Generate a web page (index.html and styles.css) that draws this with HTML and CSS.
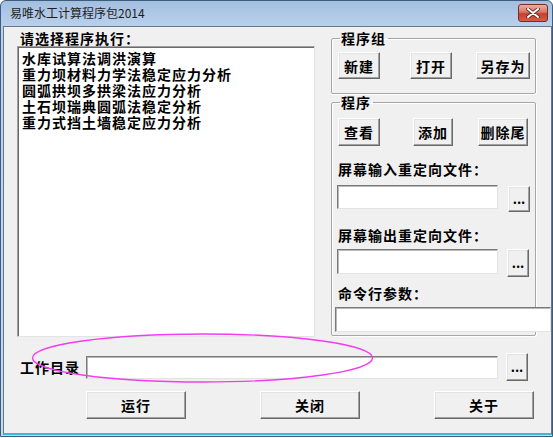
FILE: index.html
```html
<!DOCTYPE html>
<html>
	<head>
		<meta charset="UTF-8">
		<title>易唯水工计算程序包2014</title>
		<link rel="stylesheet" href="styles.css">
	</head>
	<body>
		<div class="window">
			<div class="titlebar">
				<span class="title">易唯水工计算程序包2014</span>
				<div class="close">
					<svg width="16" height="10" viewBox="0 0 16 10">
						<path d="M3 1 L13 9 M13 1 L3 9" stroke="#5a2a24" stroke-width="3.6" stroke-linecap="round"/>
						<path d="M3 1 L13 9 M13 1 L3 9" stroke="#fff" stroke-width="2" stroke-linecap="round"/>
					</svg>
				</div>
			</div>

			<div class="client">
				<div class="top">
					<div class="left">
						<div class="label">请选择程序执行：</div>
						<div class="listbox">
							<div>水库试算法调洪演算</div>
							<div>重力坝材料力学法稳定应力分析</div>
							<div>圆弧拱坝多拱梁法应力分析</div>
							<div>土石坝瑞典圆弧法稳定分析</div>
							<div>重力式挡土墙稳定应力分析</div>
						</div>
					</div>

					<div class="right">
						<fieldset class="group g1">
							<legend>程序组</legend>
							<div class="btnrow">
								<div class="btn b-new">新建</div>
								<div class="btn b-open">打开</div>
								<div class="btn b-save">另存为</div>
							</div>
						</fieldset>

						<fieldset class="group g2">
							<legend>程序</legend>
							<div class="btnrow r2">
								<div class="btn b-view">查看</div>
								<div class="btn b-add">添加</div>
								<div class="btn b-del">删除尾</div>
							</div>
							<div class="label f1">屏幕输入重定向文件：</div>
							<div class="filerow r-in">
								<div class="edit"></div>
								<div class="btn dots">...</div>
							</div>
							<div class="label f2">屏幕输出重定向文件：</div>
							<div class="filerow r-out">
								<div class="edit"></div>
								<div class="btn dots">...</div>
							</div>
							<div class="label f3">命令行参数：</div>
							<div class="edit cmd"></div>
						</fieldset>
					</div>
				</div>

				<div class="workrow">
					<div class="label wlabel">工作目录</div>
					<div class="edit wedit"></div>
					<div class="btn dots wdots">...</div>
				</div>

				<div class="bottom">
					<div class="btn big">运行</div>
					<div class="btn big">关闭</div>
					<div class="btn big">关于</div>
				</div>
			</div>

			<svg class="mark" width="553" height="438" viewBox="0 0 553 438">
				<ellipse cx="202.5" cy="358" rx="170" ry="24" fill="none" stroke="#f23cf2" stroke-width="1.4"/>
			</svg>
		</div>
	</body>
</html>
```

FILE: styles.css
```css
*{
	box-sizing: border-box;
}
body{
	margin:0;
	background:#fff;
	font-family: "Noto Sans CJK SC", "Liberation Sans", sans-serif;
}
.window{
	position: relative;
	width:553px;
	height:437px;
	border:1px solid #3f5c7c;
	border-radius: 6px 6px 0 0;
	background: linear-gradient(#a3bfe0, #bad1eb 26px, #c4d8ee);
	padding: 0 0 1px 2px;
}
.titlebar{
	height:25px;
	position: relative;
}
.title{
	position: absolute;
	left:7px;
	top:4px;
	font-size:12px;
	line-height:16px;
	color:#1e1e1e;
}
.close{
	position: absolute;
	left:515px;
	top:3px;
	width:30px;
	height:18px;
	border:1px solid #7a2b22;
	border-radius:3px;
	background: linear-gradient(#eab0a2, #d87462 45%, #c2412c 55%, #d0604c);
	display:flex;
	align-items:center;
	justify-content:center;
}
.client{
	height:409px;
	background:#f0f0f0;
	border:1px solid #63788f;
	border-bottom:2px solid #43b5d8;
}
.top{
	display:flex;
	padding: 3px 0 0 13px;
	height: 310px;
}
.left{
	width:298px;
}
.label{
	font-size:14px;
	line-height:16px;
	font-weight:bold;
	letter-spacing:1px;
	color:#000;
	padding-left:3px;
	white-space: nowrap;
}
.listbox{
	height:291px;
	background:#fff;
	border:1px solid;
	border-color:#a0a0a0 #e3e3e3 #e3e3e3 #a0a0a0;
	box-shadow: inset 1px 1px #696969;
	padding:3px 0 0 4px;
	font-size:14px;
	line-height:16px;
	font-weight:bold;
	letter-spacing:1px;
}
.right{
	width:205px;
	margin-left:16px;
}
.group{
	margin:0;
	border:1px solid #a6a6a6;
	border-radius:2px;
	box-shadow: 1px 1px #fff, inset 1px 1px #fff;
	padding:0 5px 0 6px;
	min-width:0;
}
.group legend{
	font-size:14px;
	line-height:16px;
	font-weight:bold;
	letter-spacing:1px;
	padding:0 2px 0 1px;
	margin-left:2px;
}
.g1{
	height:64px;
}
.g2{
	margin-top:0;
	height:242px;
	overflow: visible;
}
.btn{
	background:#f0f0f0;
	border:1px solid;
	border-color:#fff #696969 #696969 #fff;
	box-shadow: inset -1px -1px #a0a0a0, inset 1px 1px #e3e3e3;
	font-size:14px;
	font-weight:bold;
	letter-spacing:1px;
	display:flex;
	align-items:center;
	justify-content:center;
	color:#000;
}
.btnrow{
	display:flex;
	margin-top:6px;
	height:27px;
}
.btnrow .btn{
	height:100%;
}
.b-new{ width:42px; }
.b-open{ width:42px; margin-left:30px; }
.b-save{ width:54px; margin-left:24px; }
.r2{
	margin-top:8px;
	height:28px;
}
.b-view{ width:42px; }
.b-add{ width:40px; margin-left:33px; }
.b-del{ width:50px; margin-left:25px; }

.f1{ margin-top:15px; }
.f2{ margin-top:15px; }
.f3{ margin-top:8px; }
.label.f1, .label.f2, .label.f3{
	padding-left:0;
}
.filerow{
	display:flex;
	align-items:flex-start;
	margin-left:-1px;
}
.r-in{ margin-top:8px; }
.r-out{ margin-top:6px; }
.edit{
	background:#fff;
	border:1px solid;
	border-color:#7a7a7a #e3e3e3 #e3e3e3 #7a7a7a;
	box-shadow: inset 1px 1px #b8b8b8;
}
.filerow .edit{
	width:161px;
	height:24px;
}
.r-in .dots{
	margin:1px 0 0 10px;
	height:26px;
}
.r-out .edit{
	height:25px;
}
.r-out .dots{
	margin:0 0 0 9px;
	height:28px;
}
.dots{
	width:22px;
	font-size:13px;
	letter-spacing:0;
	padding-bottom:2px;
}
.cmd{
	margin:6px 0 0 -3px;
	width:216px;
	height:25px;
	position: relative;
}
.workrow{
	display:flex;
	align-items:center;
	margin-top:16px;
	padding-left:13px;
	height:28px;
}
.wlabel{
	width:69px;
}
.wedit{
	width:412px;
	height:23px;
}
.wdots{
	margin-left:8px;
	height:28px;
}
.bottom{
	display:flex;
	gap:74px;
	margin-top:10px;
	padding-left:82px;
}
.big{
	width:100px;
	height:28px;
	letter-spacing:1px;
	font-size:14px;
}
.mark{
	position: absolute;
	left:-1px;
	top:-1px;
	pointer-events:none;
}
```
